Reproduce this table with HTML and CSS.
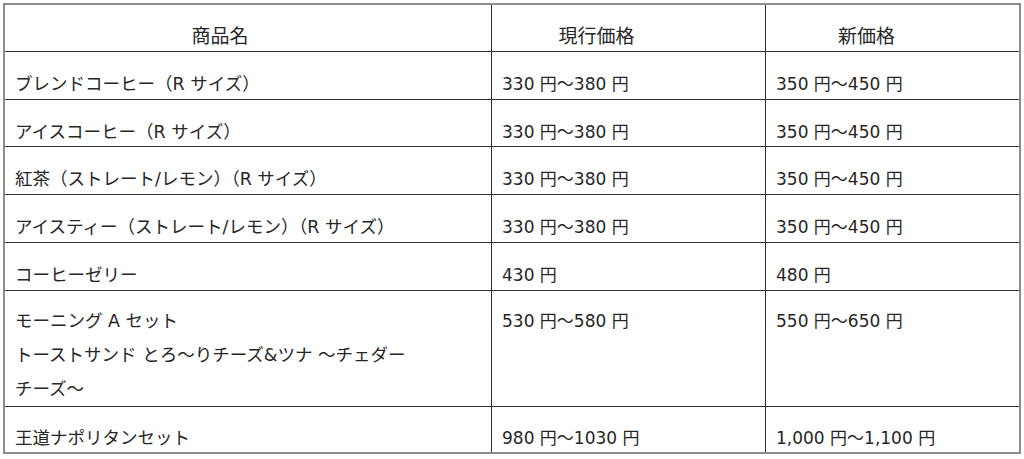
FILE: index.html
```html
<!DOCTYPE html>
<html lang="ja">
<head>
<meta charset="utf-8">
<title>価格改定一覧</title>
<link rel="stylesheet" href="styles.css">
</head>
<body>
<table class="price-table">
  <colgroup>
    <col class="col-name">
    <col class="col-current">
    <col class="col-new">
  </colgroup>
  <thead>
    <tr class="row-head">
      <th class="head-cell head-name">商品名</th>
      <th class="head-cell head-current">現行価格</th>
      <th class="head-cell head-new cell-last">新価格</th>
    </tr>
  </thead>
  <tbody>
    <tr class="row-48">
      <td class="name">ブレンドコーヒー（R サイズ）</td>
      <td>330 円～380 円</td>
      <td class="cell-last">350 円～450 円</td>
    </tr>
    <tr class="row-47">
      <td class="name">アイスコーヒー（R サイズ）</td>
      <td>330 円～380 円</td>
      <td class="cell-last">350 円～450 円</td>
    </tr>
    <tr class="row-48">
      <td class="name">紅茶（ストレート/レモン）（R サイズ）</td>
      <td>330 円～380 円</td>
      <td class="cell-last">350 円～450 円</td>
    </tr>
    <tr class="row-48">
      <td class="name">アイスティー（ストレート/レモン）（R サイズ）</td>
      <td>330 円～380 円</td>
      <td class="cell-last">350 円～450 円</td>
    </tr>
    <tr class="row-48">
      <td class="name">コーヒーゼリー</td>
      <td>430 円</td>
      <td class="cell-last">480 円</td>
    </tr>
    <tr class="row-tall">
      <td class="name">モーニング A セット<br>トーストサンド とろ～りチーズ&amp;ツナ ～チェダー<br>チーズ～</td>
      <td>530 円～580 円</td>
      <td class="cell-last">550 円～650 円</td>
    </tr>
    <tr class="row-last">
      <td class="name">王道ナポリタンセット</td>
      <td>980 円～1030 円</td>
      <td class="cell-last">1,000 円～1,100 円</td>
    </tr>
  </tbody>
</table>
</body>
</html>
```

FILE: styles.css
```css
html, body {
  margin: 0;
  padding: 0;
  background: #ffffff;
}

body {
  padding: 3px 0 0 3px;
  font-family: "DejaVu Sans", "Noto Sans CJK JP", sans-serif;
  color: #262626;
}

.price-table {
  width: 1018px;
  table-layout: fixed;
  border-collapse: separate;
  border-spacing: 0;
  border: 2px solid #8c8c8c;
}

.col-name { width: 487px; }
.col-current { width: 274px; }
.col-new { width: 253px; }

.price-table th,
.price-table td {
  border-right: 1px solid #2e2e2e;
  border-bottom: 1px solid #2e2e2e;
  vertical-align: top;
  text-align: left;
  font-weight: normal;
  font-size: 17px;
  line-height: 28px;
  padding: 18px 0 0 10px;
  white-space: nowrap;
}

.price-table .name {
  font-size: 17.5px;
}

.price-table .head-cell {
  text-align: center;
  font-size: 19px;
  padding-top: 17px;
  padding-left: 0;
}

.price-table .head-name { padding-right: 56px; }
.price-table .head-current { padding-right: 64px; }
.price-table .head-new { padding-right: 52px; }

.price-table .cell-last {
  border-right: none;
}

.row-head { height: 47px; }
.row-48 { height: 48px; }
.row-47 { height: 47px; }
.row-tall { height: 116px; }
.row-last { height: 45px; }

.price-table .row-tall td {
  line-height: 34px;
  padding-top: 13px;
}

.price-table .row-last td {
  border-bottom: none;
  padding-top: 17px;
}
```
